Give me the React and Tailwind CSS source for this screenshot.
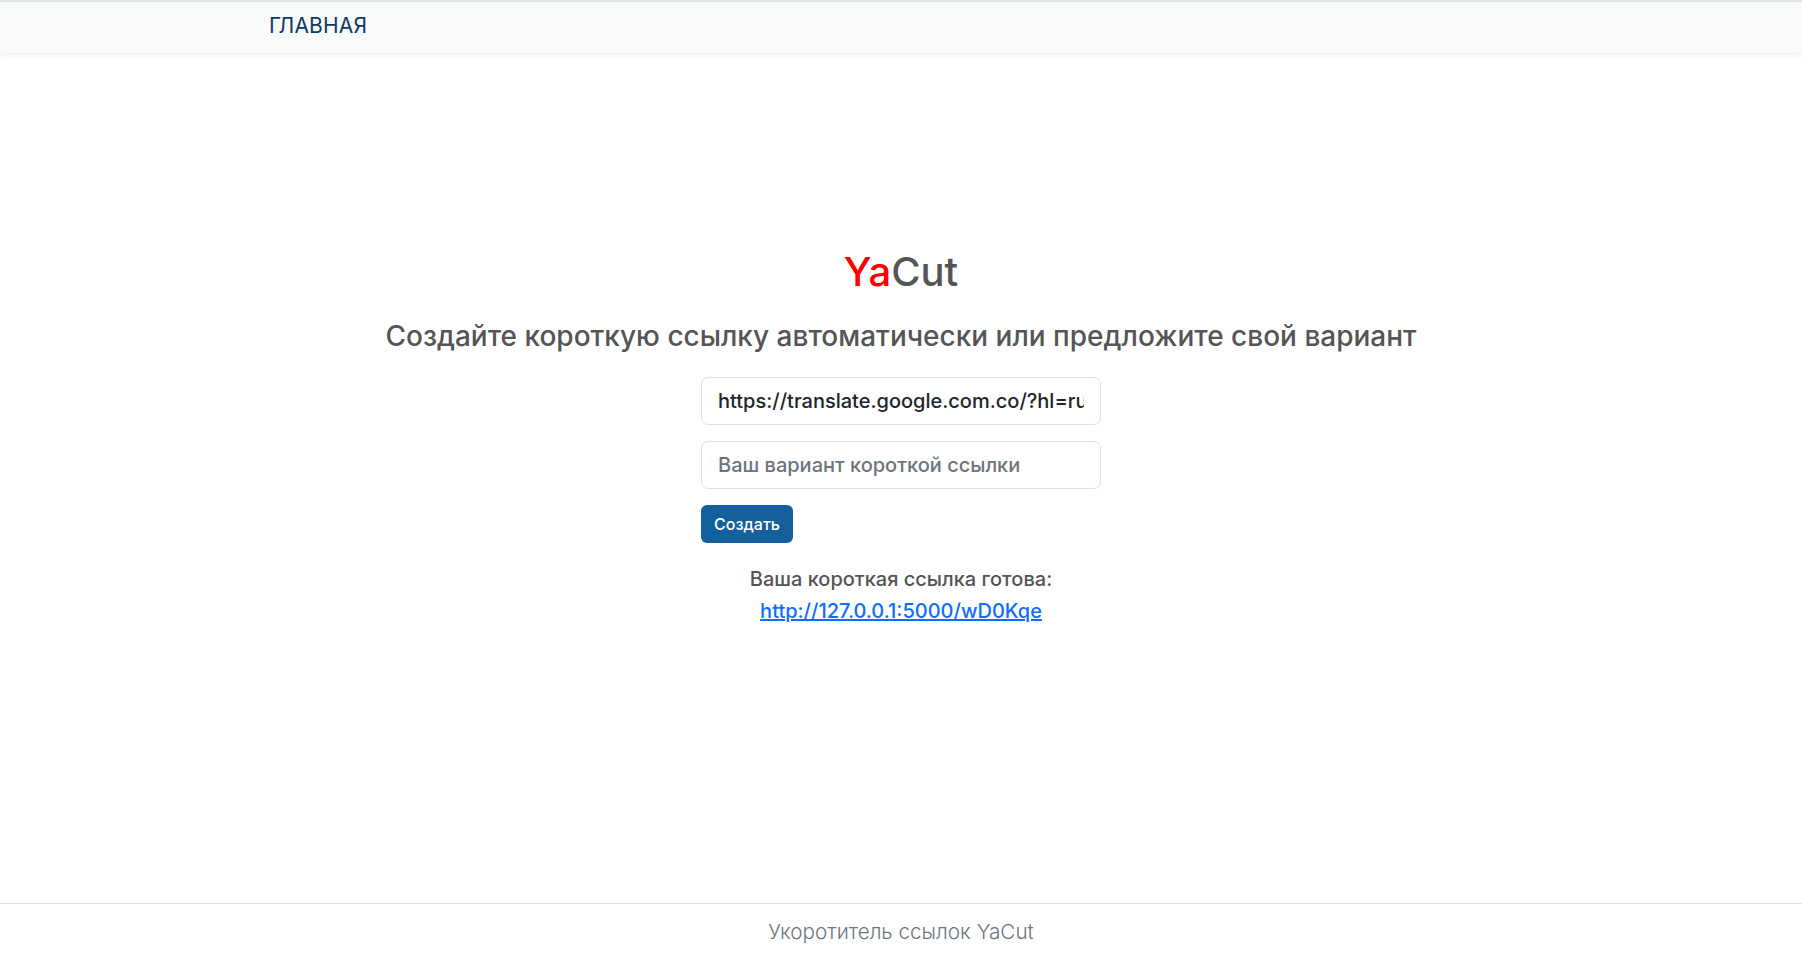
import React, { useState } from 'react';

export default function App() {
  const [url, setUrl] = useState("https://translate.google.com.co/?hl=ru&sl=auto&tl=en&op=translate");
  const [custom, setCustom] = useState("");

  return (
    <div className="min-h-screen flex flex-col bg-white text-[#555]" style={{ fontFamily: 'Inter, "Noto Sans", sans-serif' }}>
      {/* ШАПКА */}
      <header className="h-[53px] border-t-2 border-[#dfe2e6] bg-[#f8f9fa] shadow-[0_2px_6px_rgba(0,0,0,0.08)]">
        <div className="h-full flex items-center pl-[269px] pb-[4px]">
          <a href="#" className="text-[21px] leading-none text-[#0b3b63] tracking-[0.2px]">ГЛАВНАЯ</a>
        </div>
      </header>

      <main className="flex-1 flex flex-col items-center">
        <h1 className="mt-[195px] text-[40px] leading-[48px] font-medium">
          <span className="text-[#ff0000]">Ya</span>Cut
        </h1>
        <h3 className="mt-[23px] text-[28px] leading-[34px] font-medium">
          Создайте короткую ссылку автоматически или предложите свой вариант
        </h3>

        <form className="mt-[24px] w-[400px] flex flex-col" onSubmit={(e) => e.preventDefault()}>
          <input
            type="text"
            value={url}
            onChange={(e) => setUrl(e.target.value)}
            className="h-[48px] w-full rounded-[7px] border border-[#dee2e6] px-4 text-[20px] font-medium text-[#212529] outline-none"
          />
          <input
            type="text"
            value={custom}
            placeholder="Ваш вариант короткой ссылки"
            onChange={(e) => setCustom(e.target.value)}
            className="mt-4 h-[48px] w-full rounded-[7px] border border-[#dee2e6] px-4 text-[20px] font-medium text-[#212529] placeholder:text-[#6c757d] outline-none"
          />
          <div className="mt-4">
            <button type="submit" className="h-[38px] w-[92px] rounded-[6px] bg-[#14609c] text-white text-[16px] font-medium">
              Создать
            </button>
          </div>
        </form>

        <h5 className="mt-[24px] text-[20px] leading-[24px] font-medium">Ваша короткая ссылка готова:</h5>
        <a href="#" className="mt-[8px] text-[20px] leading-[24px] font-medium text-[#0d6efd] underline">
          http://127.0.0.1:5000/wD0Kqe
        </a>
      </main>

      {/* ПОДВАЛ */}
      <footer className="h-[70px] border-t border-[#dee2e6] pt-4 text-center">
        <span className="text-[20.7px] leading-[24px] font-light text-[#6c757d]">Укоротитель ссылок YaCut</span>
      </footer>
    </div>
  );
}
